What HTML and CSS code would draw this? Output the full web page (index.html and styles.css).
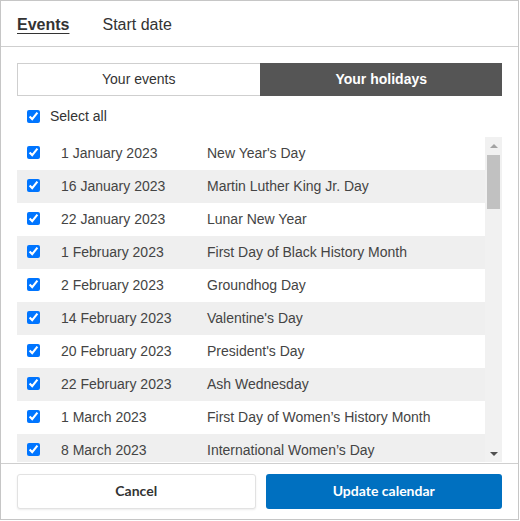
FILE: index.html
```html
<!DOCTYPE html>
<html lang="en">
<head>
    <meta charset="UTF-8">
    <meta name="viewport" content="width=device-width, initial-scale=1.0">
    <title>Add to calendar</title>
    <link rel="stylesheet" href="styles.css">
</head>
<body>
    <div class="dialog">
        <!-- Tabs -->
        <div class="tabs">
            <span class="tab active">Events</span>
            <span class="tab">Start date</span>
        </div>

        <div class="content">
            <!-- Events / holidays switch -->
            <div class="toggle">
                <button class="toggle-btn">Your events</button>
                <button class="toggle-btn selected">Your holidays</button>
            </div>

            <label class="select-all">
                <input type="checkbox" checked>
                <span>Select all</span>
            </label>

            <div class="list-wrap">
                <ul class="holiday-list">
                    <li class="holiday"><input type="checkbox" checked><span class="date">1 January 2023</span><span class="name">New Year's Day</span></li>
                    <li class="holiday"><input type="checkbox" checked><span class="date">16 January 2023</span><span class="name">Martin Luther King Jr. Day</span></li>
                    <li class="holiday"><input type="checkbox" checked><span class="date">22 January 2023</span><span class="name">Lunar New Year</span></li>
                    <li class="holiday"><input type="checkbox" checked><span class="date">1 February 2023</span><span class="name">First Day of Black History Month</span></li>
                    <li class="holiday"><input type="checkbox" checked><span class="date">2 February 2023</span><span class="name">Groundhog Day</span></li>
                    <li class="holiday"><input type="checkbox" checked><span class="date">14 February 2023</span><span class="name">Valentine's Day</span></li>
                    <li class="holiday"><input type="checkbox" checked><span class="date">20 February 2023</span><span class="name">President's Day</span></li>
                    <li class="holiday"><input type="checkbox" checked><span class="date">22 February 2023</span><span class="name">Ash Wednesday</span></li>
                    <li class="holiday"><input type="checkbox" checked><span class="date">1 March 2023</span><span class="name">First Day of Women’s History Month</span></li>
                    <li class="holiday"><input type="checkbox" checked><span class="date">8 March 2023</span><span class="name">International Women’s Day</span></li>
                </ul>

                <!-- Scrollbar -->
                <div class="scrollbar">
                    <div class="scroll-arrow up"></div>
                    <div class="scroll-track">
                        <div class="scroll-thumb"></div>
                    </div>
                    <div class="scroll-arrow down"></div>
                </div>
            </div>
        </div>

        <div class="footer">
            <button class="btn btn-cancel">Cancel</button>
            <button class="btn btn-primary">Update calendar</button>
        </div>
    </div>
</body>
</html>
```

FILE: styles.css
```css
/* Basic setup */
* {
    margin: 0;
    padding: 0;
    box-sizing: border-box;
}

body {
    font-family: "Liberation Sans", Arial, sans-serif;
    color: #333;
    background-color: #fff;
}

.dialog {
    width: 519px;
    height: 520px;
    border: 1px solid #c6c6c6;
    display: flex;
    flex-direction: column;
    background-color: #fff;
}

/* Tabs */
.tabs {
    height: 46px;
    display: flex;
    align-items: center;
    gap: 33px;
    padding: 3px 16px 0;
    border-bottom: 1px solid #cfcfcf;
}

.tab {
    font-size: 16px;
    color: #333;
}

.tab.active {
    font-weight: bold;
    text-decoration: underline;
    text-underline-offset: 3px;
}

.content {
    padding: 16px 16px 0;
}

/* Events / holidays switch */
.toggle {
    display: flex;
    height: 33px;
}

.toggle-btn {
    flex: 1;
    padding-bottom: 2px;
    font-family: inherit;
    font-size: 14px;
    color: #333;
    background-color: #fff;
    border: 1px solid #cfcfcf;
    border-right: none;
}

.toggle-btn.selected {
    background-color: #555;
    border-color: #555;
    color: #fff;
    font-weight: bold;
}

input[type="checkbox"] {
    width: 13px;
    height: 13px;
    margin: 0;
    accent-color: #0075ff;
}

.select-all {
    height: 41px;
    display: flex;
    align-items: center;
    gap: 10px;
    padding: 0 0 1px 10px;
    font-size: 14px;
    color: #333;
}

/* Holiday list */
.list-wrap {
    display: flex;
    height: 325px;
}

.holiday-list {
    flex: 1;
    list-style: none;
    overflow: hidden;
}

.holiday {
    height: 33px;
    display: flex;
    align-items: center;
    padding: 0 0 2px 10px;
    font-size: 14px;
    color: #444;
}

.holiday:nth-child(even) {
    background-color: #efefef;
}

.holiday input {
    margin-top: -1px;
}

.holiday .date {
    width: 167px;
    padding-left: 21px;
}

.scrollbar {
    width: 17px;
    display: flex;
    flex-direction: column;
    background-color: #f1f1f1;
}

.scroll-arrow {
    height: 17px;
    display: flex;
    justify-content: center;
    align-items: center;
}

.scroll-arrow::before {
    content: "";
    border-left: 4px solid transparent;
    border-right: 4px solid transparent;
}

.scroll-arrow.up::before {
    border-bottom: 4px solid #a3a3a3;
}

.scroll-arrow.down::before {
    border-top: 4px solid #505050;
}

.scroll-track {
    flex: 1;
    padding: 0 2px;
}

.scroll-thumb {
    height: 54px;
    margin-top: 1px;
    background-color: #c1c1c1;
}

/* Footer buttons */
.footer {
    margin-top: auto;
    display: flex;
    gap: 10px;
    padding: 10px 16px 10px;
    border-top: 1px solid #cfcfcf;
}

.btn {
    flex: 1;
    height: 35px;
    padding: 0;
    line-height: 1.2;
    font-family: Lato, "Liberation Sans", sans-serif;
    font-weight: bold;
    font-size: 14px;
    border-radius: 3px;
    cursor: pointer;
}

.btn-cancel {
    background-color: #fff;
    color: #333;
    border: 1px solid #e2e2e2;
    box-shadow: 0 1px 2px rgba(0, 0, 0, 0.08);
}

.btn-primary {
    background-color: #0070c0;
    color: #fff;
    border: none;
}
```
